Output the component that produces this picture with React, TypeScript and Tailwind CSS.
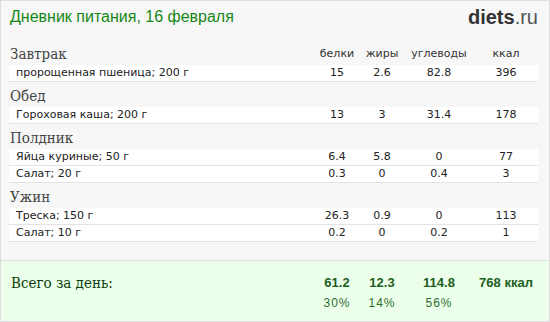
import React from 'react';

type Item = { name: string; p: string; f: string; c: string; k: string };
type Meal = { title: string; items: Item[] };

const meals: Meal[] = [
  { title: 'Завтрак', items: [{ name: 'пророщенная пшеница; 200 г', p: '15', f: '2.6', c: '82.8', k: '396' }] },
  { title: 'Обед', items: [{ name: 'Гороховая каша; 200 г', p: '13', f: '3', c: '31.4', k: '178' }] },
  {
    title: 'Полдник',
    items: [
      { name: 'Яйца куриные; 50 г', p: '6.4', f: '5.8', c: '0', k: '77' },
      { name: 'Салат; 20 г', p: '0.3', f: '0', c: '0.4', k: '3' },
    ],
  },
  {
    title: 'Ужин',
    items: [
      { name: 'Треска; 150 г', p: '26.3', f: '0.9', c: '0', k: '113' },
      { name: 'Салат; 10 г', p: '0.2', f: '0', c: '0.2', k: '1' },
    ],
  },
];

const serif = 'font-["DejaVu_Serif_Condensed","DejaVu_Serif",serif] [font-stretch:condensed]';

function Cols({ a, b, c, d, className = '' }: { a: string; b: string; c: string; d: string; className?: string }) {
  return (
    <div className={`flex ${className}`}>
      <div className="w-[46px] text-center">{a}</div>
      <div className="w-[44px] text-center">{b}</div>
      <div className="w-[70px] text-center">{c}</div>
      <div className="w-[64px] text-center">{d}</div>
    </div>
  );
}

export default function App() {
  return (
    <div className="w-[550px] h-[322px] border border-[#dedede] bg-[#f7f7f7] flex flex-col font-['DejaVu_Sans',sans-serif]">
      {/* Title */}
      <div className="h-[39px] flex items-start justify-between pt-[5px] pl-[9px] pr-[11px]">
        <div className="text-[16px] leading-[22px] text-[#168716] font-['Liberation_Sans',Arial,sans-serif]">
          Дневник питания, 16 февраля
        </div>
        <div className="text-[20px] leading-[22px] text-[#333] font-['Liberation_Sans',Arial,sans-serif]">
          <span className="font-bold">diets</span>
          <span className="text-[#555]">.ru</span>
        </div>
      </div>

      {/* Meals */}
      <div className="ml-[8px] mr-[11px]">
        {meals.map((meal, i) => (
          <div key={meal.title}>
            <div className="h-[25px] flex items-end justify-between pb-[2px] pl-[1px]">
              <div className={`text-[15px] leading-[18px] text-[#444] ${serif}`}>{meal.title}</div>
              {i === 0 && <Cols a="белки" b="жиры" c="углеводы" d="ккал" className="text-[11px] leading-[18px] text-[#333]" />}
            </div>
            {meal.items.map((it) => (
              <div
                key={it.name}
                className="h-[17px] bg-white border-b border-[#e3e3e3] flex items-center justify-between text-[11px] text-[#222]"
              >
                <div className="pl-[7px]">{it.name}</div>
                <Cols a={it.p} b={it.f} c={it.c} d={it.k} />
              </div>
            ))}
          </div>
        ))}
      </div>

      <div className="flex-1" />

      {/* Totals */}
      <div className="h-[61px] border-t border-[#dcdcdc] bg-[#ebffeb] pt-[13px] pl-[10px] pr-[11px] flex justify-between">
        <div className={`text-[15px] leading-[18px] text-[#0b3f0b] ${serif}`}>Всего за день:</div>
        <div className="font-['Liberation_Sans',Arial,sans-serif]">
          <Cols a="61.2" b="12.3" c="114.8" d="768 ккал" className="text-[13px] leading-[18px] font-bold text-[#1d5e1d]" />
          <Cols a="30%" b="14%" c="56%" d="" className="mt-[2px] text-[12px] leading-[18px] tracking-[1px] text-[#2f6e2f]" />
        </div>
      </div>
    </div>
  );
}
